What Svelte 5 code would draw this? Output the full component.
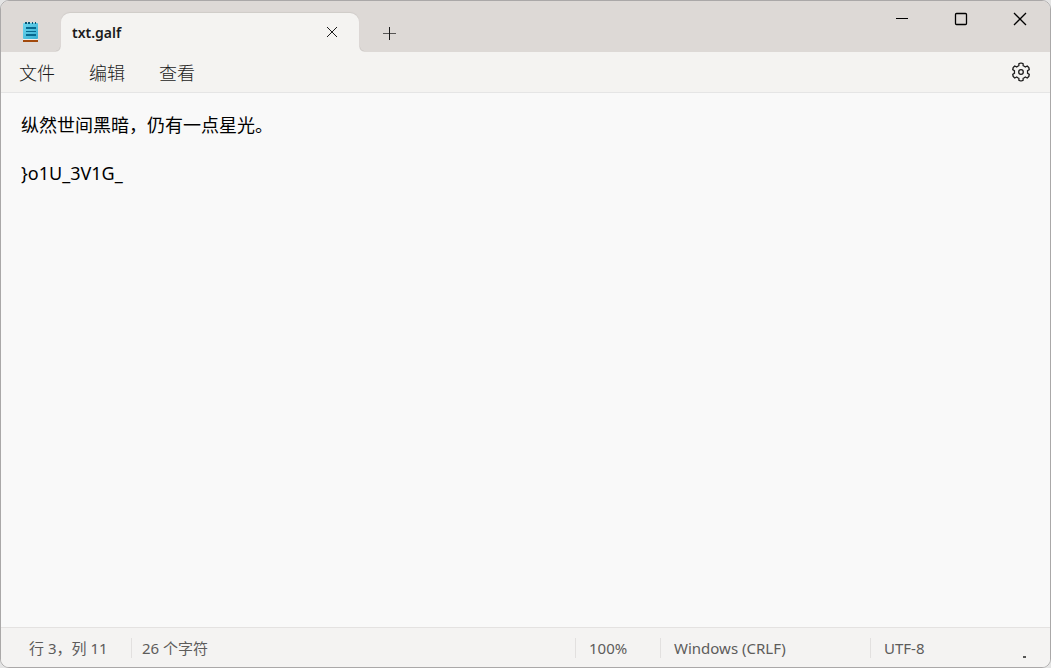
<script lang="ts">
  let content = $state('纵然世间黑暗，仍有一点星光。\n\n}o1U_3V1G_');

  const menus = ['文件', '编辑', '查看'];

  // outline of the settings gear: six teeth around (10, 10)
  const gear = [0, 60, 120, 180, 240, 300]
    .flatMap((a) => [[a - 30, 6.6], [a - 19, 6.6], [a - 14, 8.6], [a, 9], [a + 14, 8.6], [a + 19, 6.6]])
    .map(([deg, r]) => {
      const t = (deg * Math.PI) / 180;
      return `${(10 + r * Math.sin(t)).toFixed(2)},${(10 - r * Math.cos(t)).toFixed(2)}`;
    })
    .join(' ');
</script>

<div class="window">
  <header class="titlebar">
    <svg class="logo" width="16" height="22" viewBox="0 0 16 22" aria-hidden="true">
      <defs>
        <linearGradient id="pad" x1="0" y1="0" x2="1" y2="1">
          <stop offset="0" stop-color="#6fd6ee" />
          <stop offset="1" stop-color="#35afd3" />
        </linearGradient>
      </defs>
      <rect x="0" y="18" width="15" height="2" fill="#f3efec" />
      <rect x="0" y="19" width="15" height="2" fill="#a24a0c" />
      <rect x="0" y="2" width="15" height="16" rx="1" fill="url(#pad)" />
      <path d="M2 1h2v2H2zM5 1h2v2H5zM9 1h1v2H9zM12 1h1v2h-1z" fill="#0b5878" />
      <path d="M3 6h10v2H3zM3 10h10v1H3zM3 13h10v2H3z" fill="#07698f" />
    </svg>

    <div class="tab">
      <span class="title">txt.galf</span>
      <button class="tab-close" aria-label="关闭选项卡">
        <svg width="12" height="12" viewBox="0 0 12 12"><path d="M1 1l10 10M11 1L1 11" /></svg>
      </button>
    </div>
    <button class="new-tab" aria-label="新建选项卡">
      <svg width="13" height="13" viewBox="0 0 13 13"><path d="M6.5 0v13" /><path d="M0 6.5h13" stroke-opacity="0.7" /></svg>
    </button>

    <div class="controls">
      <button aria-label="最小化">
        <svg width="14" height="14" viewBox="0 0 14 14"><path d="M1 6.5h12" /></svg>
      </button>
      <button aria-label="最大化">
        <svg width="14" height="14" viewBox="0 0 14 14"><rect x="1.5" y="1.5" width="11" height="11" rx="1" stroke-width="1.3" /></svg>
      </button>
      <button aria-label="关闭">
        <svg width="14" height="14" viewBox="0 0 14 14"><path d="M1 1l12 12M13 1L1 13" stroke-width="1.3" /></svg>
      </button>
    </div>
  </header>

  <nav class="menubar">
    {#each menus as menu}
      <button class="menu">{menu}</button>
    {/each}
    <button class="settings" aria-label="设置">
      <svg width="20" height="20" viewBox="0 0 20 20">
        <polygon points={gear} />
        <circle cx="10" cy="10" r="2.3" />
      </svg>
    </button>
  </nav>

  <textarea class="editor" aria-label="文本编辑器" spellcheck="false" bind:value={content}></textarea>

  <footer class="statusbar">
    <span class="position">行 3，列 11</span>
    <span class="count">26 个字符</span>
    <span class="zoom">100%</span>
    <span class="eol">Windows (CRLF)</span>
    <span class="encoding">UTF-8</span>
    <i class="grip"></i>
  </footer>
</div>

<style>
  :global(body) { margin: 0; background: #e4e4e4; }

  .window {
    display: flex;
    flex-direction: column;
    box-sizing: border-box;
    height: 100vh;
    border: 1px solid #aaa8a8;
    border-radius: 9px;
    overflow: hidden;
    background: #f9f9f9;
    color: #1b1b1b;
    font-family: "Noto Sans", "Noto Sans CJK SC", sans-serif;
  }

  button {
    display: flex;
    align-items: center;
    justify-content: center;
    padding: 0;
    border: none;
    background: none;
    color: inherit;
    font: inherit;
  }
  button svg { fill: none; stroke: #1b1b1b; stroke-width: 1; }

  .titlebar { display: flex; align-items: flex-end; height: 51px; background: #ddd9d6; }
  .logo { margin: 0 22px 9px; }

  .tab {
    position: relative;
    display: flex;
    align-items: center;
    justify-content: space-between;
    box-sizing: border-box;
    width: 298px;
    height: 39px;
    padding: 0 16px 0 11px;
    border-radius: 9px 9px 0 0;
    background: #f4f3f1;
    box-shadow: 0 -1px 1px #cfcbc8;
  }
  /* curved feet where the tab meets the menu bar */
  .tab::before, .tab::after {
    content: "";
    position: absolute;
    bottom: 0;
    width: 5px;
    height: 5px;
  }
  .tab::before { right: 100%; background: radial-gradient(circle at 0 0, #ddd9d6 3px, #cfcbc8 4px, #f4f3f1 5px); }
  .tab::after { left: 100%; background: radial-gradient(circle at 100% 0, #ddd9d6 3px, #cfcbc8 4px, #f4f3f1 5px); }
  .title { font-size: 14px; font-weight: 600; }
  .tab-close { width: 22px; height: 20px; margin-bottom: 2px; }
  .new-tab { width: 40px; height: 38px; margin-left: 10px; }

  .controls { display: flex; align-self: flex-start; margin-left: auto; padding-right: 1px; }
  .controls button { width: 59px; height: 36px; }
  .controls svg { stroke: #000; }

  .menubar {
    display: flex;
    align-items: center;
    height: 41px;
    box-sizing: border-box;
    padding: 0 19px 0 1px;
    border-bottom: 1px solid #e5e5e5;
    background: #f4f3f1;
    font-family: "Noto Sans CJK SC", sans-serif;
    font-size: 18px;
    font-weight: 300;
  }
  .menu { width: 70px; height: 36px; }
  .settings { margin-left: auto; }
  .settings svg { stroke-width: 1.3; stroke-linejoin: round; }

  .editor {
    flex: 1;
    min-height: 0;
    padding: 20px;
    border: none;
    outline: none;
    resize: none;
    background: #f9f9f9;
    color: #000;
    font-family: "Noto Sans", "Noto Sans CJK SC", sans-serif;
    font-size: 18px;
    line-height: 24px;
  }

  .statusbar {
    position: relative;
    display: flex;
    align-items: center;
    height: 40px;
    box-sizing: border-box;
    border-top: 1px solid #e4e2e1;
    background: #f4f3f2;
    color: #5d5c5b;
    font-size: 15px;
    line-height: 20px;
    white-space: nowrap;
  }
  .statusbar span { box-sizing: border-box; padding-left: 13px; }
  .statusbar span + span { border-left: 1px solid #e2e0df; }
  .statusbar .position { width: 130px; padding-left: 28px; }
  .statusbar .count { padding-left: 10px; }
  .statusbar .zoom { width: 85px; margin-left: auto; }
  .eol { width: 210px; }
  .encoding { width: 180px; }
  .grip { position: absolute; right: 24px; bottom: 9px; width: 3px; height: 2px; background: #555; }
</style>
